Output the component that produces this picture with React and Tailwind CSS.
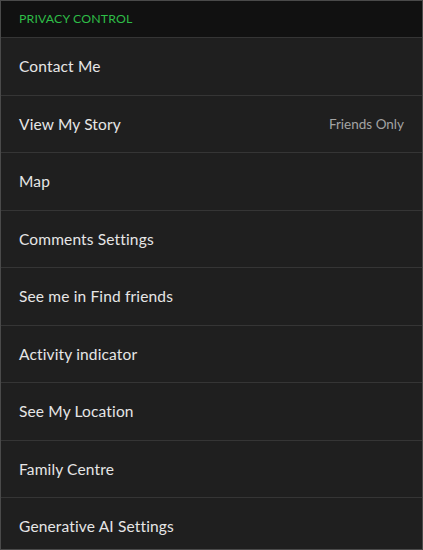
import React from "react";

const rows = [
  { label: "Contact Me" },
  { label: "View My Story", value: "Friends Only" },
  { label: "Map" },
  { label: "Comments Settings" },
  { label: "See me in Find friends" },
  { label: "Activity indicator" },
  { label: "See My Location" },
  { label: "Family Centre" },
  { label: "Generative AI Settings" },
];

export default function App() {
  return (
    <div
      className="w-[423px] h-[550px] overflow-hidden bg-[#1f1f1f] border border-[#4a4a4a] flex flex-col"
      style={{ fontFamily: "Lato, 'Open Sans', sans-serif" }}
    >
      <div className="h-[36px] shrink-0 bg-[#111111] flex items-center pl-[18px] text-[12.3px] text-[#2ebd47] tracking-[0.15px]">
        PRIVACY CONTROL
      </div>
      {rows.map((r) => (
        <div
          key={r.label}
          className="h-[57.5px] shrink-0 border-t border-[#353535] flex items-center justify-between pl-[18px] pr-[18px]"
        >
          <span className="text-[15.5px] text-[#e6e6e6] tracking-[0.15px] pt-[1px]">{r.label}</span>
          {r.value && (
            <span className="text-[13.5px] text-[#a3a3a3]">{r.value}</span>
          )}
        </div>
      ))}
    </div>
  );
}
